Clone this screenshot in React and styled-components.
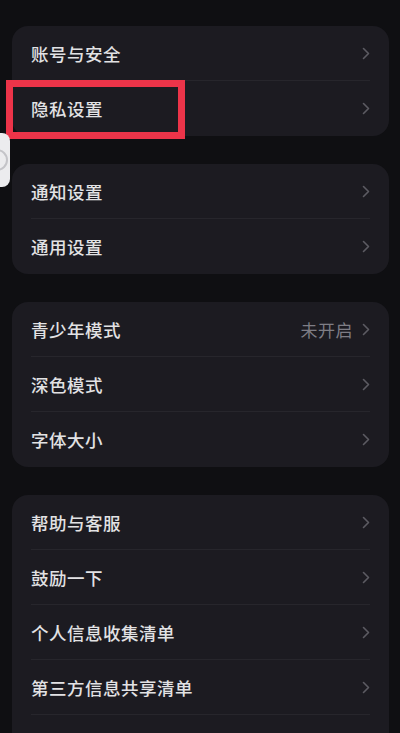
import React from "react";
import styled, { createGlobalStyle } from "styled-components";

const GlobalStyle = createGlobalStyle`
  html, body {
    margin: 0;
    padding: 0;
    background: #0f0f12;
  }
  body {
    font-family: "Noto Sans CJK SC", "Noto Sans", sans-serif;
    overflow: hidden;
  }
`;

const groups = [
  [
    { label: "账号与安全" },
    { label: "隐私设置", highlight: true },
  ],
  [{ label: "通知设置" }, { label: "通用设置" }],
  [
    { label: "青少年模式", value: "未开启" },
    { label: "深色模式" },
    { label: "字体大小" },
  ],
  [
    { label: "帮助与客服" },
    { label: "鼓励一下" },
    { label: "个人信息收集清单" },
    { label: "第三方信息共享清单" },
    { label: "", empty: true },
  ],
];

function Chevron() {
  return (
    <svg width="8" height="13" viewBox="0 0 8 13" fill="none">
      <path
        d="M1.5 1.5 L6.5 6.5 L1.5 11.5"
        stroke="#5c5b62"
        strokeWidth="1.6"
        strokeLinecap="round"
        strokeLinejoin="round"
      />
    </svg>
  );
}

export default function App() {
  return (
    <>
      <GlobalStyle />
      <Page>
        {groups.map((rows, gi) => (
          <Card key={gi}>
            {rows.map((row, ri) => (
              <Row key={ri} $last={ri === rows.length - 1}>
                <Label>{row.label}</Label>
                {!row.empty && (
                  <Right>
                    {row.value && <Value>{row.value}</Value>}
                    <Chevron />
                  </Right>
                )}
                {row.highlight && <Highlight />}
              </Row>
            ))}
          </Card>
        ))}
        <FloatTab>
          <TabRing />
        </FloatTab>
      </Page>
    </>
  );
}

const Page = styled.div`
  position: relative;
  height: 733px;
  padding: 26px 11px 0 12px;
  box-sizing: border-box;
  display: flex;
  flex-direction: column;
  gap: 28px;
  overflow: hidden;
`;

const Card = styled.div`
  background: #1c1b21;
  border-radius: 16px;
  display: flex;
  flex-direction: column;
  flex-shrink: 0;
`;

const Row = styled.div`
  position: relative;
  height: 55px;
  display: flex;
  align-items: center;
  justify-content: space-between;
  padding: 0 19px 0 19px;

  &::after {
    content: "";
    display: ${(p) => (p.$last ? "none" : "block")};
    position: absolute;
    left: 19px;
    right: 19px;
    bottom: 0;
    height: 1px;
    background: #27262c;
  }
`;

const Label = styled.span`
  font-size: 17.5px;
  font-weight: 500;
  color: #e2e2e4;
  letter-spacing: 0.5px;
`;

const Right = styled.div`
  display: flex;
  align-items: center;
  gap: 9px;
`;

const Value = styled.span`
  font-size: 17px;
  color: #7e7d85;
  letter-spacing: 0.5px;
`;

const Highlight = styled.div`
  position: absolute;
  left: -6px;
  top: -1px;
  width: 179px;
  height: 59px;
  box-sizing: border-box;
  border: 7px solid #ec3449;
  pointer-events: none;
`;

const FloatTab = styled.div`
  position: absolute;
  left: 0;
  top: 133px;
  width: 10px;
  height: 54px;
  background: #ececee;
  border-radius: 0 8px 8px 0;
  overflow: hidden;
`;

const TabRing = styled.div`
  position: absolute;
  left: -14px;
  top: 16px;
  width: 18px;
  height: 18px;
  border: 2px solid #c4c4c8;
  border-radius: 50%;
`;
